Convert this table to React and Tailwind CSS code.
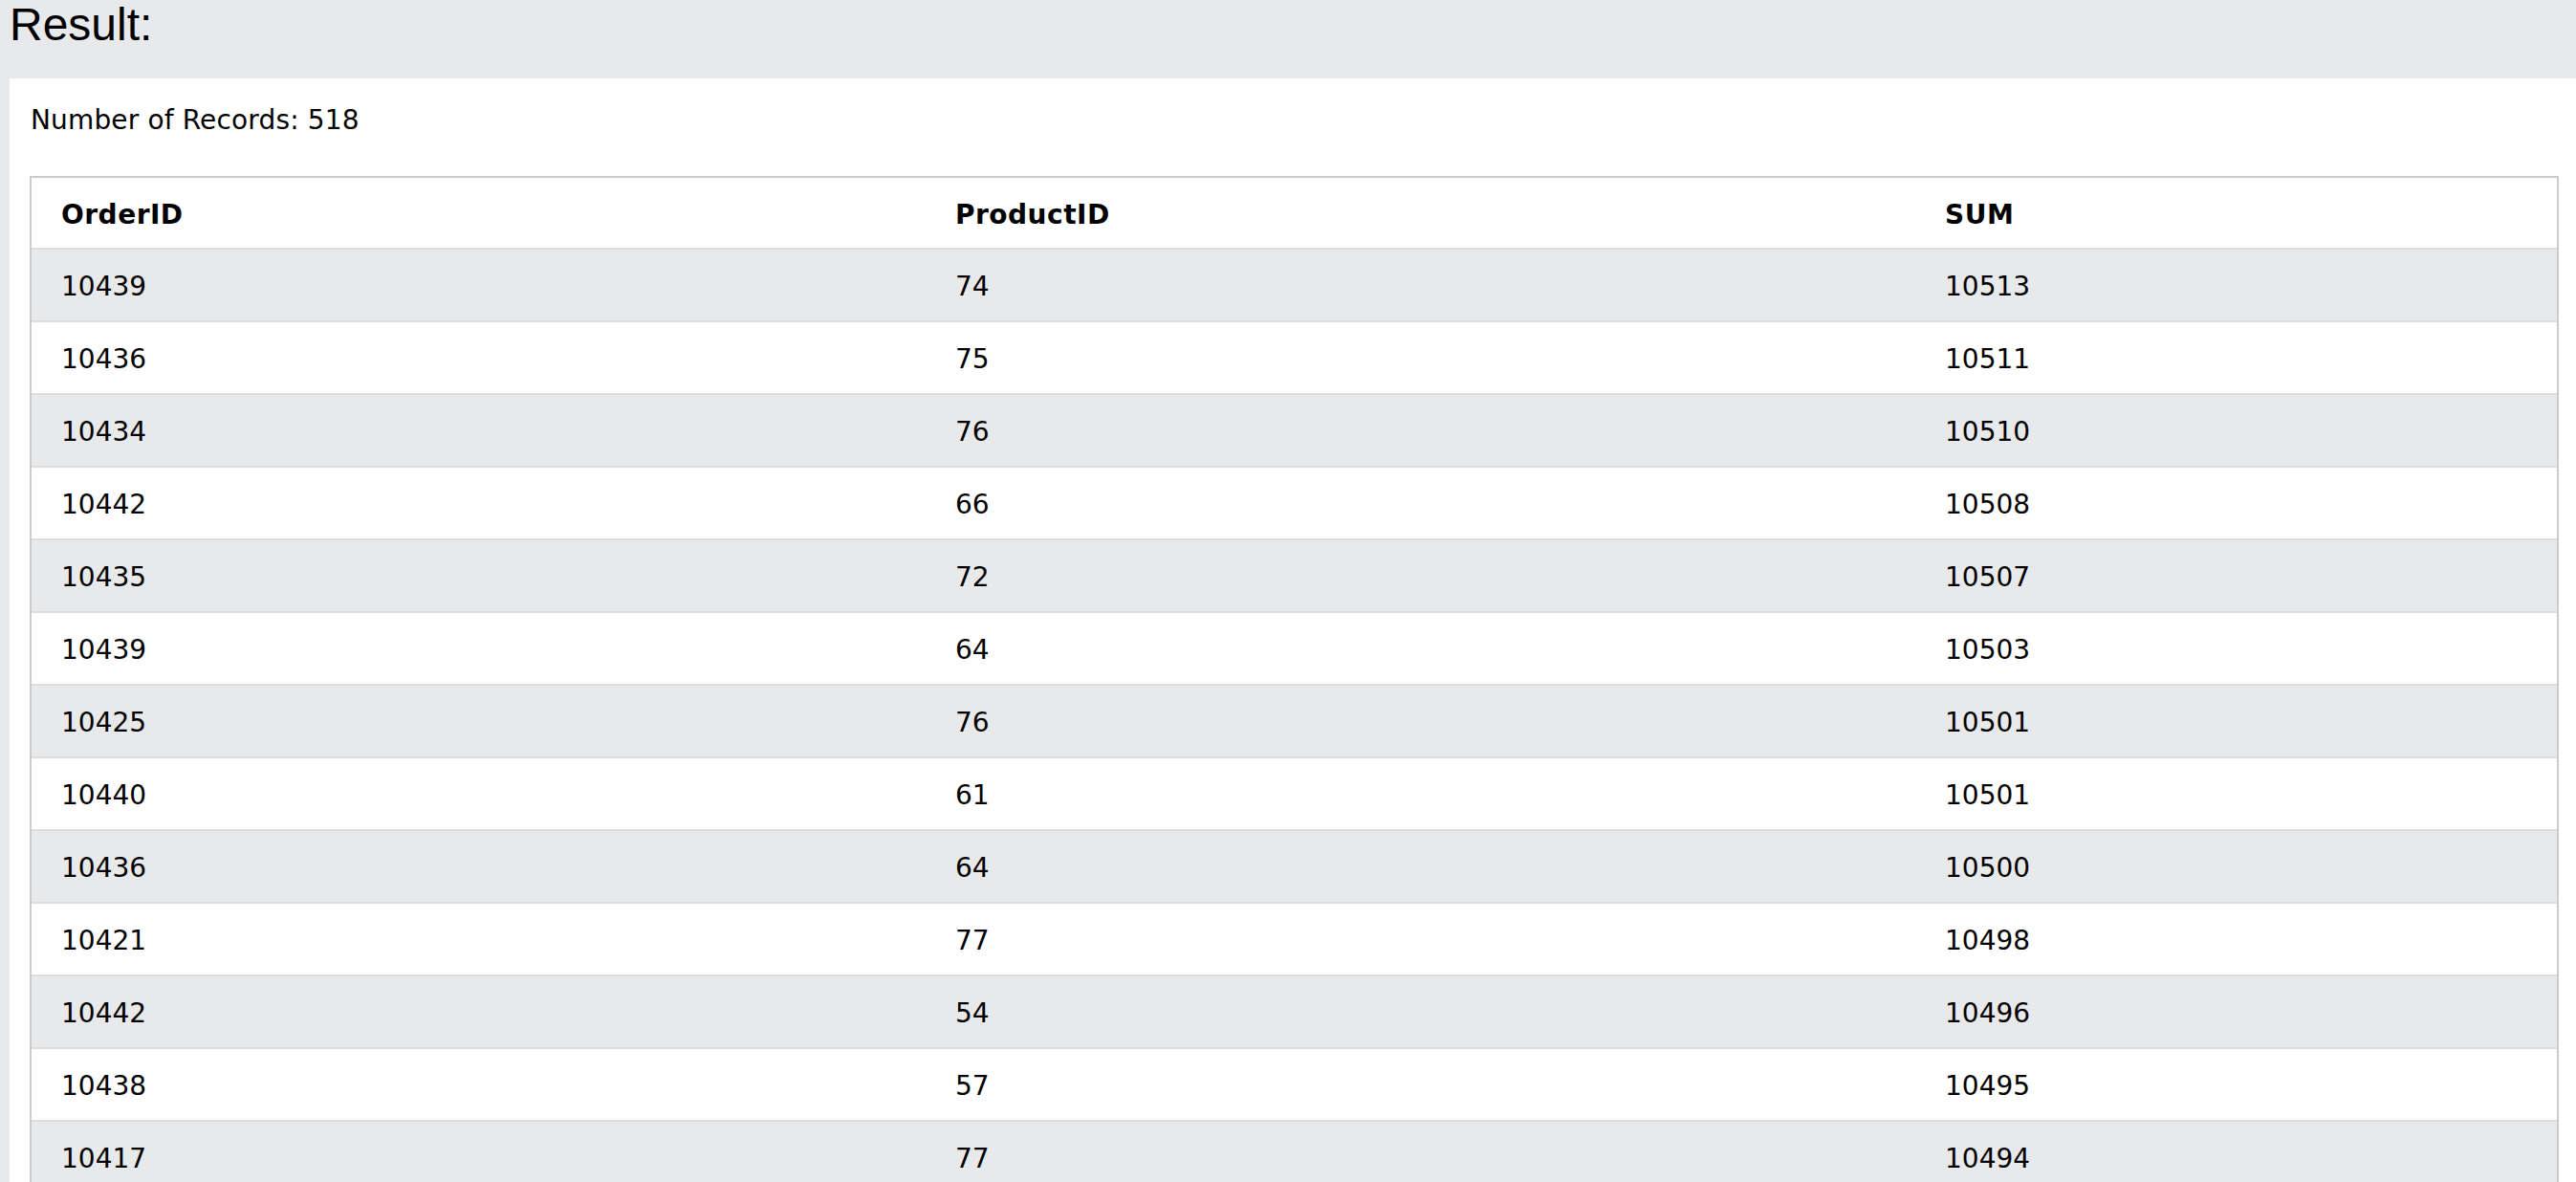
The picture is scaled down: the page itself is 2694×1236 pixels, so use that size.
const rows = [
    ["10439", "74", "10513"],
    ["10436", "75", "10511"],
    ["10434", "76", "10510"],
    ["10442", "66", "10508"],
    ["10435", "72", "10507"],
    ["10439", "64", "10503"],
    ["10425", "76", "10501"],
    ["10440", "61", "10501"],
    ["10436", "64", "10500"],
    ["10421", "77", "10498"],
    ["10442", "54", "10496"],
    ["10438", "57", "10495"],
    ["10417", "77", "10494"],
];

const verdana = { fontFamily: '"DejaVu Sans", Verdana, sans-serif' };

export default function App() {
    return (
        <div className="min-h-screen bg-[#e7e9eb] text-black">
            <div className="h-[82px] pl-[10px] pt-[2px]">
                <h2 className="text-[48px] leading-[48px] font-normal" style={{fontFamily: '"Liberation Sans", Arial, sans-serif'}}>
                    Result:
                </h2>
            </div>

            <div className="ml-[10px] bg-white pl-[21px] pr-[18px] pt-[24px] pb-[20px]" style={verdana}>
                <div className="text-[28px] leading-[40px] tracking-[0.15px] pl-[1px]">Number of Records: 518</div>

                <div className="mt-[38px] border-2 border-[#cccccc]">
                    <div className="grid grid-cols-[952px_1035px_1fr] h-[75px] pt-[4px] items-center border-b-2 border-[#dddddd] bg-white text-[28px] font-bold tracking-[0.5px]">
                        <div className="pl-[31px]">OrderID</div>
                        <div className="pl-[14px]">ProductID</div>
                        <div className="pl-[14px]">SUM</div>
                    </div>
                    {rows.map((r, i) => (
                        <div
                            key={i}
                            className={`grid grid-cols-[952px_1035px_1fr] h-[76px] pt-[4px] items-center border-b-2 border-[#dddddd] text-[28px] ${i % 2 === 0 ? "bg-[#e7e9eb]" : "bg-white"}`}>
                            <div className="pl-[31px]">{r[0]}</div>
                            <div className="pl-[14px]">{r[1]}</div>
                            <div className="pl-[14px]">{r[2]}</div>
                        </div>
                    ))}
                </div>
            </div>
        </div>
    );
}
